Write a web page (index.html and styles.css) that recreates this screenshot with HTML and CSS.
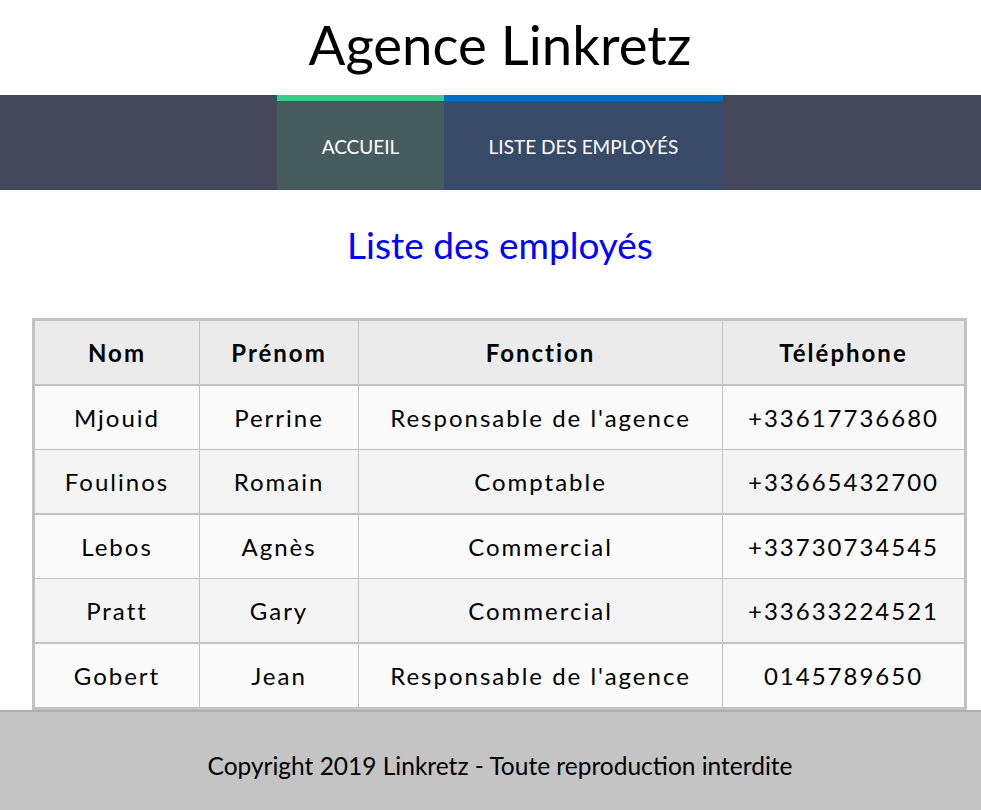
FILE: index.html
```html
<!DOCTYPE html>
<html lang="fr">
<head>
<meta charset="utf-8">
<title>Agence Linkretz</title>
<link rel="stylesheet" href="styles.css">
</head>
<body>
<div class="page">
<header class="site-header">
  <h1 class="site-title">Agence Linkretz</h1>
</header>
<nav class="main-nav">
  <a class="nav-item nav-home" href="#">Accueil</a>
  <a class="nav-item nav-list" href="#">Liste des employés</a>
</nav>
<main class="content">
  <h2 class="page-title">Liste des employés</h2>
  <div class="table-wrap">
    <table class="staff">
      <colgroup>
        <col class="c-nom">
        <col class="c-prenom">
        <col class="c-fonction">
        <col class="c-tel">
      </colgroup>
      <thead>
        <tr><th>Nom</th><th>Prénom</th><th>Fonction</th><th>Téléphone</th></tr>
      </thead>
      <tbody>
        <tr><td>Mjouid</td><td>Perrine</td><td>Responsable de l'agence</td><td>+33617736680</td></tr>
        <tr><td>Foulinos</td><td>Romain</td><td>Comptable</td><td>+33665432700</td></tr>
        <tr><td>Lebos</td><td>Agnès</td><td>Commercial</td><td>+33730734545</td></tr>
        <tr><td>Pratt</td><td>Gary</td><td>Commercial</td><td>+33633224521</td></tr>
        <tr><td>Gobert</td><td>Jean</td><td>Responsable de l'agence</td><td>0145789650</td></tr>
      </tbody>
    </table>
  </div>
</main>
<footer class="site-footer">
  <p class="copyright">Copyright 2019 Linkretz - Toute reproduction interdite</p>
</footer>
</div>
</body>
</html>
```

FILE: styles.css
```css
* { box-sizing: border-box; }
html { overflow-x: hidden; }
html, body { margin: 0; padding: 0; }
body {
  font-family: Lato, "Open Sans", sans-serif;
  color: #000;
  background: #fff;
}
.page {
  width: 1000px;
}
.site-header {
  height: 95px;
  display: flex;
  align-items: center;
  justify-content: center;
}
.site-title {
  margin: 0;
  font-weight: 400;
  font-size: 54.5px;
  line-height: 1;
  padding-bottom: 6px;
}
.main-nav {
  height: 95px;
  background: #434759;
  display: flex;
  justify-content: center;
}
.nav-item {
  display: flex;
  align-items: center;
  justify-content: center;
  color: #fff;
  text-decoration: none;
  text-transform: uppercase;
  font-size: 19px;
  border-top: 6px solid;
  padding-top: 2px;
}
.nav-home {
  width: 167px;
  background: #455b5e;
  border-top-color: #44c887;
}
.nav-list {
  width: 279px;
  background: #374b69;
  border-top-color: #0070c0;
}
.content {
  padding-top: 27px;
}
.page-title {
  margin: 0;
  text-align: center;
  color: #0000ff;
  font-weight: 400;
  font-size: 37px;
  line-height: 56px;
}
.table-wrap {
  padding: 45px 33px 0 32px;
}
.staff {
  width: 935px;
  border-collapse: separate;
  border-spacing: 0;
  border: 3px solid #c2c2c2;
  table-layout: fixed;
  font-size: 24px;
  letter-spacing: 2px;
}
.c-nom { width: 165px; }
.c-prenom { width: 159px; }
.c-fonction { width: 364px; }
.c-tel { width: 241px; }
.staff th,
.staff td {
  border: 0 solid #c2c2c2;
  border-right-width: 1px;
  border-bottom-width: 1px;
  text-align: center;
  height: 64px;
  padding: 0;
  font-weight: 400;
}
.staff th:last-child,
.staff td:last-child { border-right-width: 0; }
.staff th {
  background: #ebebeb;
  font-weight: 700;
  border-bottom-width: 2px;
  height: 65px;
}
.staff tbody tr:nth-child(odd) td { background: #fafafa; }
.staff tbody tr:nth-child(even) td { background: #f4f4f4; border-bottom-width: 2px; height: 65px; }
.staff tbody tr:last-child td { border-bottom-width: 0; height: 63px; }
.site-footer {
  background: #c4c4c4;
  border-top: 2px solid #adadad;
  height: 100px;
  display: flex;
  align-items: center;
  justify-content: center;
}
.copyright {
  margin: 0;
  font-size: 24.5px;
  padding-top: 8px;
}
```
